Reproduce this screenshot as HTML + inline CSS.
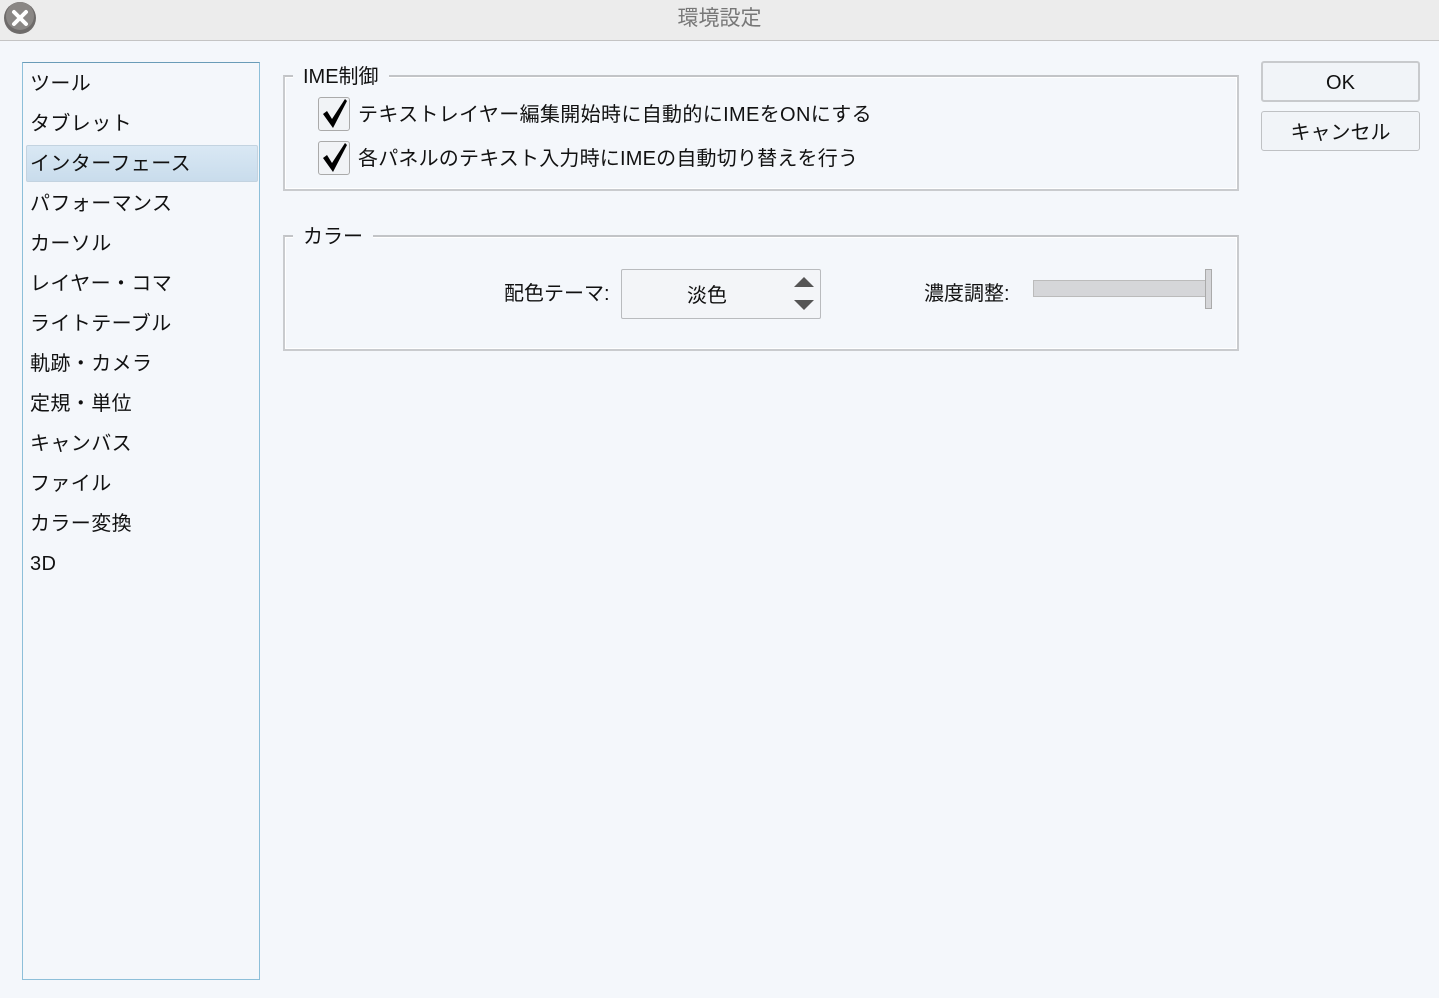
<!DOCTYPE html><html><head><meta charset="utf-8"><style>
body{margin:0;width:1439px;height:998px;background:#f4f7fb;font-family:"Liberation Sans","Noto Sans CJK JP",sans-serif;color:#111;position:relative;overflow:hidden}
.a{position:absolute}
.t{font-size:20px;line-height:24px;white-space:nowrap}
.grp{position:absolute;border:2px solid #c9cbce;border-top-color:#c2c4c7;box-shadow:inset 0 0 0 1px #fff}
.leg{position:absolute;background:#f4f7fb;padding:0 10px;font-size:20px;line-height:24px}
.cb{position:absolute;width:30px;height:32px;border:1px solid #aaa;border-radius:3px;background:#f1f3f6}
.btn{position:absolute;left:1261px;width:157px;border:1px solid #bfc1c4;border-radius:3px;background:#f1f4f8;text-align:center;font-size:20px}
</style></head><body>
<div class="a" style="left:0;top:0;width:1439px;height:40px;background:#ececec;border-bottom:1px solid #c4c4c4"></div>
<svg class="a" style="left:3px;top:1px" width="34" height="34"><circle cx="17" cy="17" r="16" fill="#6e6b6a"/><circle cx="17" cy="15" r="14" fill="#8a8785"/><path d="M11 11L23 23M23 11L11 23" stroke="#fff" stroke-width="4" stroke-linecap="round"/></svg>
<div class="a t" style="left:0;width:1439px;top:7px;text-align:center;color:#777;font-size:21px">環境設定</div>

<div class="a" style="left:22px;top:62px;width:236px;height:916px;border:1px solid #8dbfd9;border-top-color:#6a9cb8;background:#f4f7fb"></div>
<div class="a" style="left:26px;top:145px;width:230px;height:35px;background:linear-gradient(#d9e8f4,#c9dcec);border:1px solid #c3d3e0;border-radius:2px"></div>
<div class="a t" style="left:30px;top:64px;line-height:40px;letter-spacing:0.4px">ツール<br>タブレット<br>インターフェース<br>パフォーマンス<br>カーソル<br>レイヤー・コマ<br>ライトテーブル<br>軌跡・カメラ<br>定規・単位<br>キャンバス<br>ファイル<br>カラー変換<br>3D</div>

<div class="grp" style="left:283px;top:75px;width:952px;height:112px"></div>
<div class="leg" style="left:293px;top:65px">IME制御</div>
<div class="cb" style="left:318px;top:97px"></div>
<div class="cb" style="left:318px;top:141px"></div>
<svg class="a" style="left:318px;top:97px" width="32" height="80"><path d="M5 17L9 14L14 22L27 2L29 4L15 31Z" fill="#000"/><path d="M5 61L9 58L14 66L27 46L29 48L15 75Z" fill="#000"/></svg>
<div class="a t" style="left:358px;top:103px;letter-spacing:0.35px">テキストレイヤー編集開始時に自動的にIMEをONにする</div>
<div class="a t" style="left:358px;top:147px;letter-spacing:0.2px">各パネルのテキスト入力時にIMEの自動切り替えを行う</div>

<div class="grp" style="left:283px;top:235px;width:952px;height:112px"></div>
<div class="leg" style="left:293px;top:225px">カラー</div>
<div class="a t" style="left:504px;top:282px">配色テーマ:</div>
<div class="a" style="left:621px;top:269px;width:198px;height:48px;border:1px solid #b9bbbe;border-radius:2px;background:#f3f5f8"></div>
<div class="a t" style="left:687px;top:284px">淡色</div>
<svg class="a" style="left:792px;top:276px" width="24" height="36"><path d="M2 11L12 1L22 11Z" fill="#555"/><path d="M2 24L12 34L22 24Z" fill="#555"/></svg>
<div class="a t" style="left:924px;top:282px">濃度調整:</div>
<div class="a" style="left:1033px;top:280px;width:172px;height:15px;background:#d5d6d9;border:1px solid #bbb"></div>
<div class="a" style="left:1205px;top:269px;width:5px;height:38px;background:#d5d6d9;border:1px solid #aaa"></div>

<div class="btn" style="top:61px;height:37px;line-height:40px;border:2px solid #c8cacd;width:155px">OK</div>
<div class="btn" style="top:111px;height:38px;line-height:42px">キャンセル</div>
</body></html>
